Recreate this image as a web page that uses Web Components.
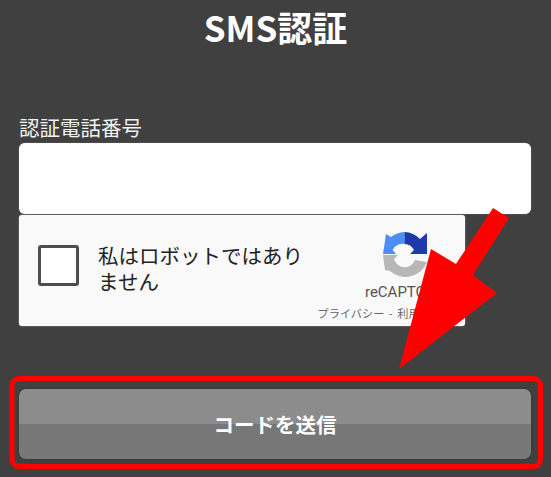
<!DOCTYPE html>
<html lang="ja"><head><meta charset="utf-8">
<style>
html,body{margin:0;padding:0;background:#404040;}
body{width:551px;height:477px;overflow:hidden;font-family:"Noto Sans CJK JP","Noto Sans",sans-serif;}
</style></head><body>
<sms-page></sms-page>
<script>
function def(name,html){
  customElements.define(name,class extends HTMLElement{
    constructor(){super();this.attachShadow({mode:'open'}).innerHTML=html;}
  });
}
def('sms-title',`<style>:host{display:block;text-align:center;color:#fff;font:700 35px/42px "Noto Sans CJK JP",sans-serif;padding-top:6px}</style><slot></slot>`);
def('sms-field',`<style>
:host{display:block;padding:0 20px 0 19px}
label{display:block;color:#f2f2f2;font:400 20.5px/28px "Noto Sans CJK JP",sans-serif;padding-bottom:2px;margin-top:-2px}
.box{height:71px;background:#fff;border-radius:6px;box-shadow:0 0 1px #bbb}
</style><label><slot></slot></label><div class="box"></div>`);
def('re-captcha',`<style>
:host{display:flex;box-sizing:border-box;width:446px;height:111px;margin:1px 0 0 19px;background:#f9f9f9;border-radius:3px;box-shadow:0 0 2px #999;font-family:"Liberation Sans","Noto Sans CJK JP",sans-serif;}
.check{flex:none;box-sizing:border-box;width:41px;height:41px;margin:30px 19px 0 19px;background:#fff;border:3px solid #4d4d4d;border-radius:3px}
.msg{flex:none;width:215px;margin-top:27px;color:#222;font:400 20.5px/26px "Noto Sans CJK JP",sans-serif}
.brand{flex:1;display:flex;flex-direction:column;align-items:flex-end;padding-top:17px;min-width:0;margin-right:35px}
svg{display:block;width:46px;height:46px;margin-right:1px}
.name{color:#555;font:400 15px/18px "Roboto","Liberation Sans",sans-serif;margin:5px -16px 0 0;white-space:nowrap}
.links{color:#666;font:400 11.2px/14px "Noto Sans CJK JP",sans-serif;word-spacing:2px;margin:5px -12px 0 0;white-space:nowrap}
</style>
<div class="check"></div>
<div class="msg"><slot></slot></div>
<div class="brand">
<svg viewBox="0 0 46 46">
<path d="M21.5 0A23 23 0 0 0 8 5L3 2L0 22H13L9.5 18A11 11 0 0 1 21.5 12Z" fill="#4c8df6"/>
<path d="M21.5 0A23 23 0 0 1 37 7L44 1V22H27L31 18A11 11 0 0 0 21.5 12Z" fill="#1c3aa9"/>
<path d="M0 23H15L11 27A11 11 0 0 0 32 28L44 30A23 23 0 0 1 7 39L2 38Z" fill="#b7b7b7"/>
</svg>
<div class="name">reCAPTCHA</div>
<div class="links">プライバシー - 利用規約</div>
</div>`);
def('sms-button',`<style>
:host{display:block;margin:63px 20px 0 19px;height:70px;border-radius:7px;background:linear-gradient(#8c8c8c 0 50%,#777 50% 100%);color:#fff;text-align:center;font:700 20.5px/70px "Noto Sans CJK JP",sans-serif;box-shadow:0 0 3px #333}
</style><slot></slot>`);
def('sms-annotations',`<style>
:host{position:absolute;left:0;top:0;width:551px;height:477px;pointer-events:none}
svg{display:block}
</style>
<svg width="551" height="477" viewBox="0 0 551 477">
<rect x="12" y="378.5" width="528.5" height="88" rx="7" fill="none" stroke="#f00" stroke-width="5"/>
<polygon points="493,208 509,218 473,275 497,293 399,369 431,249 456,264" fill="#f00"/>
</svg>`);
def('sms-page',`<style>:host{display:block;position:relative;width:551px;height:477px;overflow:hidden}
.gap{height:67px}</style>
<sms-title>SMS認証</sms-title>
<div class="gap"></div>
<sms-field>認証電話番号</sms-field>
<re-captcha>私はロボットではありません</re-captcha>
<sms-button>コードを送信</sms-button>
<sms-annotations></sms-annotations>`);
</script>
</body></html>
